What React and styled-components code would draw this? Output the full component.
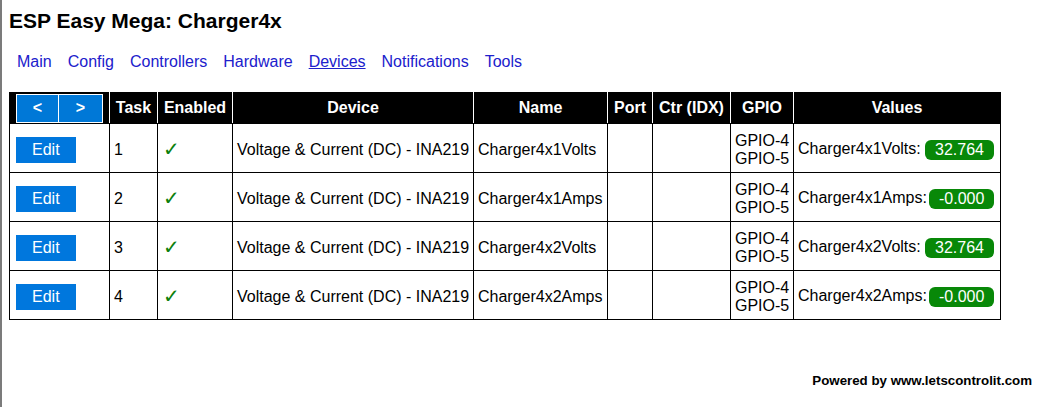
import React from "react";
import styled, { createGlobalStyle } from "styled-components";

const GlobalStyle = createGlobalStyle`
  html, body {
    margin: 0;
    padding: 0;
    background: #ffffff;
  }
  body {
    font-family: "Liberation Sans", Arial, sans-serif;
    font-size: 16px;
    color: #000;
  }
`

const Page = styled.div`
  min-height: 407px;
  box-sizing: border-box;
  border-left: 2px solid #7b7b7b;
  padding: 9px 19px 0 7px;
  display: flex;
  flex-direction: column;
`

const Title = styled.h1`
  margin: 0;
  font-size: 21px;
  font-weight: bold;
  line-height: 24px;
  color: #000;
`

const Menu = styled.nav`
  display: flex;
  margin-top: 20px;
  line-height: 18px;
`

const MenuLink = styled.a`
  padding: 0 8px;
  color: #2020cc;
  text-decoration: ${props => props.active ? "underline" : "none"};
  white-space: nowrap;
  cursor: pointer;
`

const Table = styled.table`
  margin-top: 21px;
  width: 991px;
  table-layout: fixed;
  border-collapse: collapse;
  border: 1px solid #000;
`

const Th = styled.th`
  height: 30px;
  padding: 0 4px;
  background: #000;
  color: #fff;
  font-weight: bold;
  text-align: center;
  white-space: nowrap;
  border-top: 1px solid #000;
  border-bottom: 1px solid #000;
  border-left: 1px solid #fff;
  border-right: 1px solid #fff;
  &:first-child {
    border-left-color: #000;
    text-align: left;
    padding: 0 2px 0 6px;
  }
  &:last-child {
    border-right-color: #000;
  }
`

const Td = styled.td`
  height: 40px;
  padding: 6px 4px 2px;
  border: 1px solid #000;
  vertical-align: middle;
  text-align: left;
  white-space: nowrap;
  line-height: 18px;
`

const NavGroup = styled.div`
  display: inline-flex;
  gap: 1px;
  padding: 1px;
  background: #fff;
  vertical-align: middle;
`

const NavButton = styled.a`
  display: flex;
  align-items: center;
  justify-content: center;
  width: ${props => props.w}px;
  height: 27px;
  background: #0078d7;
  color: #fff;
  font-weight: bold;
  text-decoration: none;
  cursor: pointer;
`

const EditButton = styled.a`
  display: inline-block;
  margin-left: 2px;
  padding: 4px 16px;
  background: #0077dd;
  color: #fff;
  line-height: 18px;
  text-decoration: none;
  cursor: pointer;
`

const Check = styled.span`
  display: inline-block;
  margin-left: 1px;
  color: #0c800c;
  font-family: "DejaVu Sans", sans-serif;
  font-size: 20px;
  font-weight: bold;
  line-height: 18px;
`

const ValueWrap = styled.div`
  display: flex;
  align-items: center;
  justify-content: space-between;
`

const ValueLabel = styled.span`
  margin-top: -2px;
`

const Badge = styled.span`
  margin: 2px;
  padding: 1px 10px;
  border-radius: 6px;
  background: #088808;
  color: #fff;
  line-height: 18px;
`

const Footer = styled.div`
  margin-top: 53px;
  text-align: right;
  font-size: 13.3px;
  font-weight: bold;
  line-height: 15px;
`

const MENU = ["Main", "Config", "Controllers", "Hardware", "Devices", "Notifications", "Tools"]

const COLS = [100, 48, 75, 241, 134, 45, 78, 63, 207]

const DEVICES = [
  { task: 1, name: "Charger4x1Volts", value: "32.764" },
  { task: 2, name: "Charger4x1Amps", value: "-0.000" },
  { task: 3, name: "Charger4x2Volts", value: "32.764" },
  { task: 4, name: "Charger4x2Amps", value: "-0.000" },
]

const App = () => {
  return (
    <>
      <GlobalStyle />
      <Page>
        <Title>ESP Easy Mega: Charger4x</Title>
        <Menu>
          {MENU.map(item =>
            <MenuLink key={item} active={item === "Devices"}>{item}</MenuLink>
          )}
        </Menu>
        <Table>
          <colgroup>
            {COLS.map((w, i) => <col key={i} style={{ width: w }} />)}
          </colgroup>
          <thead>
            <tr>
              <Th>
                <NavGroup>
                  <NavButton w={41}>&lt;</NavButton>
                  <NavButton w={43}>&gt;</NavButton>
                </NavGroup>
              </Th>
              <Th>Task</Th>
              <Th>Enabled</Th>
              <Th>Device</Th>
              <Th>Name</Th>
              <Th>Port</Th>
              <Th>Ctr (IDX)</Th>
              <Th>GPIO</Th>
              <Th>Values</Th>
            </tr>
          </thead>
          <tbody>
            {DEVICES.map(d =>
              <tr key={d.task}>
                <Td><EditButton>Edit</EditButton></Td>
                <Td>{d.task}</Td>
                <Td><Check>✓</Check></Td>
                <Td>Voltage &amp; Current (DC) - INA219</Td>
                <Td>{d.name}</Td>
                <Td></Td>
                <Td></Td>
                <Td>GPIO-4<br />GPIO-5</Td>
                <Td>
                  <ValueWrap>
                    <ValueLabel>{d.name}:</ValueLabel>
                    <Badge>{d.value}</Badge>
                  </ValueWrap>
                </Td>
              </tr>
            )}
          </tbody>
        </Table>
        <Footer>Powered by www.letscontrolit.com</Footer>
      </Page>
    </>
  )
}

export default App;
